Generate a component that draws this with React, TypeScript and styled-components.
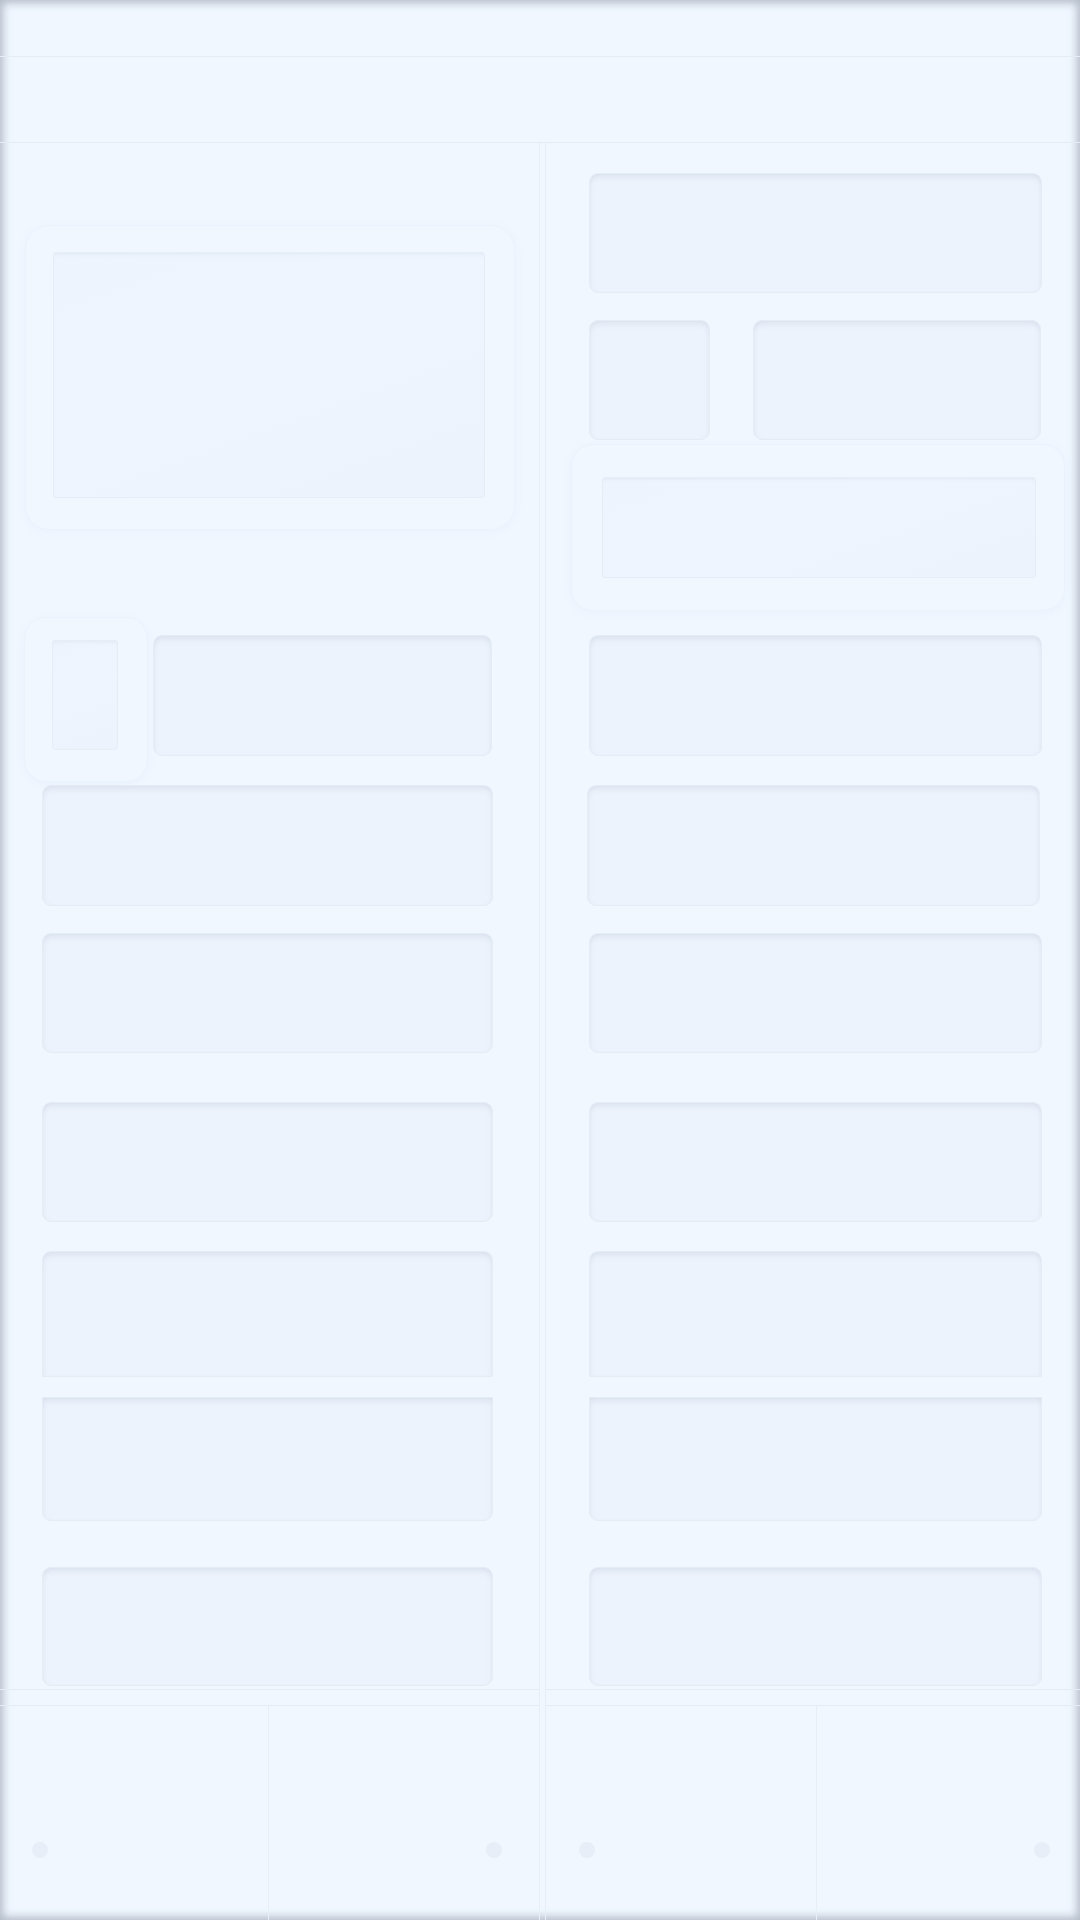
import * as React from "react"
import styled, { createGlobalStyle } from "styled-components"

const GlobalStyle = createGlobalStyle`
  html, body {
    margin: 0;
    padding: 0;
    background: #f0f7ff;
    font-family: "Inter", "Liberation Sans", sans-serif;
  }
  * {
    box-sizing: border-box;
  }
`

const Page = styled.div`
  width: 1080px;
  height: 1920px;
  display: flex;
  flex-direction: column;
  background: #f0f7ff;
  overflow: hidden;
  box-shadow: inset 0 0 9px 3px rgba(105, 115, 132, 0.45);
`

const TopBar = styled.div`
  height: 57px;
  flex-shrink: 0;
  border-bottom: 1px solid #e4ecf6;
`

const SubBar = styled.div`
  height: 86px;
  flex-shrink: 0;
  border-bottom: 1px solid #e4ecf6;
`

const Body = styled.div`
  flex: 1;
  display: grid;
  grid-template-columns: 540px 535px;
  column-gap: 5px;
  min-height: 0;
`

const Column = styled.div<{ $side: "left" | "right" }>`
  display: flex;
  flex-direction: column;
  ${(p) => (p.$side === "left" ? "border-right" : "border-left")}: 1px solid #e6eef8;
`

const Content = styled.div`
  height: 1546px;
  flex-shrink: 0;
  display: flex;
  flex-direction: column;
`

const Band = styled.div`
  height: 17px;
  flex-shrink: 0;
  border-top: 1px solid #e4ecf6;
  border-bottom: 1px solid #e4ecf6;
`

const Footer = styled.div<{ $split: number }>`
  flex: 1;
  display: grid;
  grid-template-columns: ${(p) => p.$split}px 1fr;
`

const FooterCell = styled.div<{ $align: "start" | "end"; $pad: number }>`
  display: flex;
  justify-content: ${(p) => (p.$align === "start" ? "flex-start" : "flex-end")};
  padding-top: 136px;
  ${(p) => (p.$align === "start" ? "padding-left" : "padding-right")}: ${(p) => p.$pad}px;
  & + & {
    border-left: 1px solid #e6eef8;
  }
`

const Dot = styled.div`
  width: 16px;
  height: 16px;
  border-radius: 50%;
  background: #e7eef7;
`

const Block = styled.div<{
  $w?: number
  $h?: number
  $top?: number
  $left?: number
  $flat?: "top" | "bottom"
}>`
  flex-shrink: 0;
  width: ${(p) => (p.$w ? `${p.$w}px` : "auto")};
  height: ${(p) => p.$h ?? 121}px;
  margin-top: ${(p) => p.$top ?? 0}px;
  margin-left: ${(p) => p.$left ?? 0}px;
  border-radius: ${(p) =>
    p.$flat === "top" ? "0 0 9px 9px" : p.$flat === "bottom" ? "9px 9px 0 0" : "9px"};
  background: #ecf3fc;
  border: 1px solid #e5ecf5;
  box-shadow: inset 0 7px 7px -5px rgba(120, 138, 165, 0.17),
    inset 4px 0 6px -5px rgba(120, 138, 165, 0.12),
    inset -4px 0 6px -5px rgba(120, 138, 165, 0.12);
`

const Card = styled.div<{ $w: number; $h: number; $top: number; $left: number; $pad: string; $radius?: number }>`
  flex-shrink: 0;
  width: ${(p) => p.$w}px;
  height: ${(p) => p.$h}px;
  margin-top: ${(p) => p.$top}px;
  margin-left: ${(p) => p.$left}px;
  padding: ${(p) => p.$pad};
  border-radius: ${(p) => p.$radius ?? 22}px;
  border: 1px solid #ebf2fb;
  box-shadow: 0 2px 10px rgba(150, 170, 200, 0.07);
  display: flex;
`

const Picture = styled.div`
  flex: 1;
  border-radius: 3px;
  border: 1px solid #e6edf6;
  background: linear-gradient(160deg, #edf4fd 0%, #eef5fe 45%, #ecf3fc 100%);
  box-shadow: inset 0 4px 5px -4px rgba(120, 138, 165, 0.14);
`

const Row = styled.div<{ $top: number }>`
  display: flex;
  align-items: flex-start;
  margin-top: ${(p) => p.$top}px;
`

const rows: { top: number; h: number; flat?: "top" | "bottom" }[] = [
  { top: 27, h: 120 },
  { top: 49, h: 120 },
  { top: 29, h: 126, flat: "bottom" },
  { top: 20, h: 124, flat: "top" },
  { top: 46, h: 119 },
]

const ColumnFooter: React.FC<{ split: number; padStart: number; padEnd: number }> = ({
  split,
  padStart,
  padEnd,
}) => (
  <>
    <Band />
    <Footer $split={split}>
      <FooterCell $align="start" $pad={padStart}>
        <Dot />
      </FooterCell>
      <FooterCell $align="end" $pad={padEnd}>
        <Dot />
      </FooterCell>
    </Footer>
  </>
)

const LeftColumn: React.FC = () => (
  <Column $side="left">
    <Content>
      <Card $w={490} $h={305} $top={82} $left={25} $pad="26px 29px 31px 27px" $radius={24}>
        <Picture />
      </Card>
      <Row $top={87}>
        <Card $w={124} $h={165} $top={0} $left={24} $pad="22px 29px 31px 27px">
          <Picture />
        </Card>
        <Block $w={339} $top={18} $left={5} />
      </Row>
      <Block $w={451} $left={42} $top={3} />
      {rows.map((r, i) => (
        <Block key={i} $w={451} $left={42} $top={r.top} $h={r.h} $flat={r.flat} />
      ))}
    </Content>
    <ColumnFooter split={268} padStart={32} padEnd={37} />
  </Column>
)

const RightColumn: React.FC = () => (
  <Column $side="right">
    <Content>
      <Block $w={453} $h={120} $top={30} $left={43} />
      <Row $top={27}>
        <Block $w={121} $h={120} $left={43} />
        <Block $w={288} $h={120} $left={43} />
      </Row>
      <Card $w={494} $h={167} $top={4} $left={25} $pad="32px 28px 32px 30px">
        <Picture />
      </Card>
      <Block $w={453} $left={43} $top={24} />
      <Block $w={453} $left={41} $top={29} />
      {rows.map((r, i) => (
        <Block key={i} $w={453} $left={43} $top={r.top} $h={r.h} $flat={r.flat} />
      ))}
    </Content>
    <ColumnFooter split={270} padStart={33} padEnd={30} />
  </Column>
)

const App: React.FC = () => (
  <>
    <GlobalStyle />
    <Page>
      <TopBar />
      <SubBar />
      <Body>
        <LeftColumn />
        <RightColumn />
      </Body>
    </Page>
  </>
)

export default App
